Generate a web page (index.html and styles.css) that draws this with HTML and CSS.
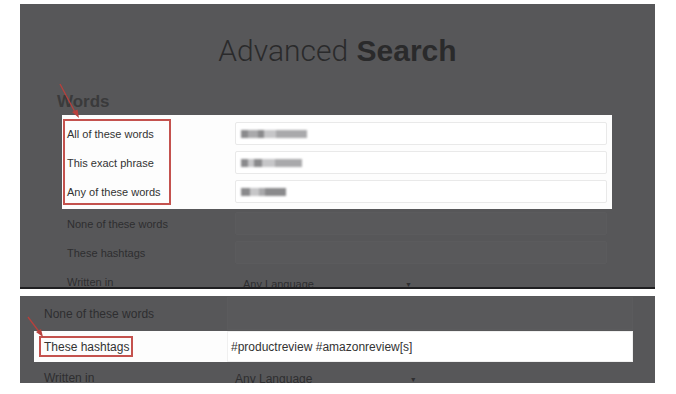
FILE: index.html
```html
<!DOCTYPE html>
<html lang="en">
<head>
    <meta charset="UTF-8">
    <meta name="viewport" content="width=device-width, initial-scale=1.0">
    <title>Advanced Search</title>
    <link rel="stylesheet" href="styles.css">
</head>
<body>
    <div class="panel panel-top">
        <h1 class="title"><span class="light">Advanced</span> <b>Search</b></h1>
        <h2 class="section">Words</h2>

        <div class="form">
            <div class="band">
                <div class="row">
                    <span class="label">All of these words</span>
                    <div class="field">
                        <span class="blur">
                            <i class="b1" style="width:7px"></i><i class="b2" style="width:10px"></i><i class="b1" style="width:6px"></i><i class="b3" style="width:12px"></i><i class="b2" style="width:14px"></i><i class="b2" style="width:17px"></i>
                        </span>
                    </div>
                </div>
                <div class="row">
                    <span class="label">This exact phrase</span>
                    <div class="field">
                        <span class="blur">
                            <i class="b1" style="width:7px"></i><i class="b3" style="width:6px"></i><i class="b1" style="width:8px"></i><i class="b3" style="width:13px"></i><i class="b2" style="width:10px"></i><i class="b2" style="width:17px"></i>
                        </span>
                    </div>
                </div>
                <div class="row">
                    <span class="label">Any of these words</span>
                    <div class="field">
                        <span class="blur">
                            <i class="b1" style="width:9px"></i><i class="b3" style="width:9px"></i><i class="b2" style="width:6px"></i><i class="b1" style="width:21px"></i>
                        </span>
                    </div>
                </div>
                <div class="mark mark-top"></div>
            </div>

            <div class="row dim">
                <span class="label">None of these words</span>
                <div class="field"></div>
            </div>
            <div class="row dim">
                <span class="label">These hashtags</span>
                <div class="field"></div>
            </div>
            <div class="row dim">
                <span class="label">Written in</span>
                <div class="select">Any Language <span class="caret">&#9660;</span></div>
            </div>
        </div>

        <svg class="arrow" width="635" height="283" viewBox="0 0 635 283">
            <line x1="40" y1="80" x2="56" y2="110" stroke="#b8403c" stroke-width="1.3"/>
            <path d="M59 114 L52 108 L57.5 105.5 Z" fill="#b8403c"/>
        </svg>
    </div>

    <div class="panel panel-bottom">
        <div class="form2">
            <div class="row2 dim">
                <span class="label2">None of these words</span>
                <div class="field2"></div>
            </div>
            <div class="band2">
                <div class="row2">
                    <span class="label2">These hashtags</span>
                    <div class="field2 filled">#productreview #amazonreview[s]</div>
                </div>
                <div class="mark mark-bottom"></div>
            </div>
            <div class="row2 dim">
                <span class="label2">Written in</span>
                <div class="select2">Any Language <span class="caret">&#9660;</span></div>
            </div>
        </div>

        <svg class="arrow" width="635" height="87" viewBox="0 0 635 87">
            <line x1="8" y1="21" x2="20" y2="37" stroke="#b8403c" stroke-width="1.3"/>
            <path d="M23 41 L16 36 L21 33 Z" fill="#b8403c"/>
        </svg>
    </div>
</body>
</html>
```

FILE: styles.css
```css
body {
    margin: 0;
    padding: 4px 0 0 20px;
    background: #fff;
    font-family: "Liberation Sans", Arial, sans-serif;
    color: #333;
}

.panel {
    position: relative;
    width: 635px;
    background: #575759;
    overflow: hidden;
}

.panel-top {
    height: 283px;
    border-bottom: 2px solid #1f1f21;
}

.panel-bottom {
    height: 87px;
    margin-top: 7px;
}

.title {
    margin: 0;
    padding-top: 32px;
    height: 30px;
    font-size: 30px;
    line-height: 30px;
    text-align: center;
    color: #2a2a2b;
    font-weight: normal;
}

.title .light {
    font-family: Roboto, "Liberation Sans", sans-serif;
    font-weight: 300;
}

.title b {
    font-weight: bold;
}

.section {
    margin: 26px 0 0 37px;
    font-size: 17px;
    line-height: 20px;
    font-weight: bold;
    color: #3a3a3b;
}

.form {
    width: 550px;
    margin: 3px 0 0 42px;
}

.band {
    position: relative;
    background: #fdfdfd;
    padding: 4px 0 3px;
}

.row {
    display: grid;
    grid-template-columns: 173px 1fr;
    align-items: center;
    height: 29px;
    padding-right: 5px;
}

.label {
    padding-left: 5px;
    font-size: 11px;
    color: #333;
}

.dim .label,
.dim .label2 {
    color: #2e2e30;
}

.field {
    height: 21px;
    border: 1px solid #e9e9e9;
    border-radius: 2px;
    background: #fff;
    display: flex;
    align-items: center;
    padding-left: 5px;
}

.dim .field {
    background: #59595b;
    border-color: #5b5b5d;
}

.blur {
    display: flex;
    height: 8px;
    filter: blur(1.1px);
}

.blur i {
    display: block;
    height: 8px;
}

.b1 { background: #8a8a8c; }
.b2 { background: #a9a9ab; }
.b3 { background: #c6c6c8; }

.select {
    padding-left: 8px;
    font-size: 11px;
    color: #2e2e30;
    padding-top: 4px;
}

.caret {
    display: inline-block;
    margin-left: 88px;
    font-size: 7px;
    vertical-align: 1px;
}

.mark {
    position: absolute;
    border: 2px solid #c4524e;
}

.mark-top {
    left: 1px;
    top: 4px;
    width: 104px;
    height: 82px;
}

.arrow {
    position: absolute;
    left: 0;
    top: 0;
    pointer-events: none;
}

.form2 {
    width: 599px;
    margin-left: 14px;
}

.band2 {
    position: relative;
    background: #fdfdfd;
}

.row2 {
    display: grid;
    grid-template-columns: 193px 1fr;
    align-items: center;
    height: 31px;
}

.dim.row2:first-child {
    height: 35px;
}

.label2 {
    padding-left: 10px;
    font-size: 12px;
    color: #333;
}

.field2 {
    height: 29px;
    border: 1px solid #f0f0f0;
    background: #fff;
    display: flex;
    align-items: center;
    padding-left: 3px;
    font-size: 12px;
    color: #333;
}

.dim .field2 {
    background: #59595b;
    border-color: #5b5b5d;
    height: 31px;
}

.select2 {
    padding-left: 8px;
    padding-top: 2px;
    font-size: 12px;
    color: #2e2e30;
}

.select2 .caret {
    margin-left: 94px;
}

.mark-bottom {
    left: 5px;
    top: 5px;
    width: 90px;
    height: 17px;
}
```
